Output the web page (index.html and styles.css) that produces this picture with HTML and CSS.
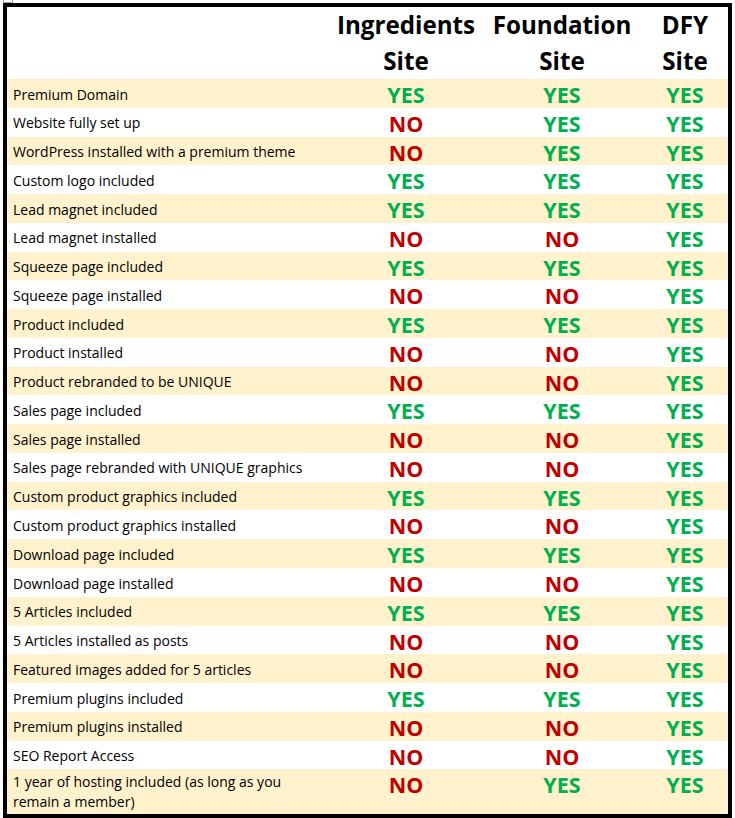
FILE: index.html
```html
<!DOCTYPE html>
<html lang="en">
<head>
<meta charset="utf-8">
<title>Site comparison</title>
<link rel="stylesheet" href="styles.css">
</head>
<body>
<div class="handle"></div>
<div class="page">
  <div class="table">
    <div class="row head">
      <div class="cell label"></div>
      <div class="cell th">Ingredients<br>Site</div>
      <div class="cell th">Foundation<br>Site</div>
      <div class="cell th">DFY<br>Site</div>
    </div>
    <div class="row alt"><div class="cell label">Premium Domain</div><div class="cell v yes">YES</div><div class="cell v yes">YES</div><div class="cell v yes">YES</div></div>
    <div class="row"><div class="cell label">Website fully set up</div><div class="cell v no">NO</div><div class="cell v yes">YES</div><div class="cell v yes">YES</div></div>
    <div class="row alt"><div class="cell label">WordPress installed with a premium theme</div><div class="cell v no">NO</div><div class="cell v yes">YES</div><div class="cell v yes">YES</div></div>
    <div class="row"><div class="cell label">Custom logo included</div><div class="cell v yes">YES</div><div class="cell v yes">YES</div><div class="cell v yes">YES</div></div>
    <div class="row alt"><div class="cell label">Lead magnet included</div><div class="cell v yes">YES</div><div class="cell v yes">YES</div><div class="cell v yes">YES</div></div>
    <div class="row"><div class="cell label">Lead magnet installed</div><div class="cell v no">NO</div><div class="cell v no">NO</div><div class="cell v yes">YES</div></div>
    <div class="row alt"><div class="cell label">Squeeze page included</div><div class="cell v yes">YES</div><div class="cell v yes">YES</div><div class="cell v yes">YES</div></div>
    <div class="row"><div class="cell label">Squeeze page installed</div><div class="cell v no">NO</div><div class="cell v no">NO</div><div class="cell v yes">YES</div></div>
    <div class="row alt"><div class="cell label">Product included</div><div class="cell v yes">YES</div><div class="cell v yes">YES</div><div class="cell v yes">YES</div></div>
    <div class="row"><div class="cell label">Product installed</div><div class="cell v no">NO</div><div class="cell v no">NO</div><div class="cell v yes">YES</div></div>
    <div class="row alt"><div class="cell label">Product rebranded to be UNIQUE</div><div class="cell v no">NO</div><div class="cell v no">NO</div><div class="cell v yes">YES</div></div>
    <div class="row"><div class="cell label">Sales page included</div><div class="cell v yes">YES</div><div class="cell v yes">YES</div><div class="cell v yes">YES</div></div>
    <div class="row alt"><div class="cell label">Sales page installed</div><div class="cell v no">NO</div><div class="cell v no">NO</div><div class="cell v yes">YES</div></div>
    <div class="row"><div class="cell label">Sales page rebranded with UNIQUE graphics</div><div class="cell v no">NO</div><div class="cell v no">NO</div><div class="cell v yes">YES</div></div>
    <div class="row alt"><div class="cell label">Custom product graphics included</div><div class="cell v yes">YES</div><div class="cell v yes">YES</div><div class="cell v yes">YES</div></div>
    <div class="row"><div class="cell label">Custom product graphics installed</div><div class="cell v no">NO</div><div class="cell v no">NO</div><div class="cell v yes">YES</div></div>
    <div class="row alt"><div class="cell label">Download page included</div><div class="cell v yes">YES</div><div class="cell v yes">YES</div><div class="cell v yes">YES</div></div>
    <div class="row"><div class="cell label">Download page installed</div><div class="cell v no">NO</div><div class="cell v no">NO</div><div class="cell v yes">YES</div></div>
    <div class="row alt"><div class="cell label">5 Articles included</div><div class="cell v yes">YES</div><div class="cell v yes">YES</div><div class="cell v yes">YES</div></div>
    <div class="row"><div class="cell label">5 Articles installed as posts</div><div class="cell v no">NO</div><div class="cell v no">NO</div><div class="cell v yes">YES</div></div>
    <div class="row alt"><div class="cell label">Featured images added for 5 articles</div><div class="cell v no">NO</div><div class="cell v no">NO</div><div class="cell v yes">YES</div></div>
    <div class="row"><div class="cell label">Premium plugins included</div><div class="cell v yes">YES</div><div class="cell v yes">YES</div><div class="cell v yes">YES</div></div>
    <div class="row alt"><div class="cell label">Premium plugins installed</div><div class="cell v no">NO</div><div class="cell v no">NO</div><div class="cell v yes">YES</div></div>
    <div class="row"><div class="cell label">SEO Report Access</div><div class="cell v no">NO</div><div class="cell v no">NO</div><div class="cell v yes">YES</div></div>
    <div class="row alt last"><div class="cell label">1 year of hosting included (as long as you<br>remain a member)</div><div class="cell v no">NO</div><div class="cell v yes">YES</div><div class="cell v yes">YES</div></div>
  </div>
</div>
</body>
</html>
```
FILE: styles.css
```css
html, body {
  margin: 0;
  padding: 0;
  background: #ffffff;
}

body {
  font-family: "Open Sans", Lato, sans-serif;
  color: #000000;
  width: 735px;
  height: 818px;
  overflow: hidden;
  position: relative;
}

.handle {
  position: absolute;
  left: 3px;
  top: -7px;
  width: 8px;
  height: 8px;
  border: 1px solid #a0a0a0;
  background: #ffffff;
}

.page {
  padding: 3px 0 0 3px;
}

.table {
  width: 721px;
  height: 807px;
  border: 4px solid #000000;
  display: flex;
  flex-direction: column;
  background: #ffffff;
}

.row {
  display: grid;
  grid-template-columns: 323px 152px 160px 86px;
  height: 28.78px;
  flex: none;
}

.row.alt {
  background: #fff2cc;
}

.row.head {
  height: 72px;
}

.row.last {
  flex: 1 1 auto;
  height: auto;
}

.cell {
  display: flex;
  align-items: center;
  min-width: 0;
}

.label {
  padding-left: 6px;
  font-size: 14px;
  line-height: 20px;
}

.th {
  justify-content: center;
  text-align: center;
  font-weight: 700;
  font-size: 24.2px;
  line-height: 36px;
}

.v {
  justify-content: center;
  align-items: flex-start;
  font-weight: 700;
  font-size: 21.5px;
  line-height: 31px;
}

.yes {
  color: #00b050;
}

.no {
  color: #c00000;
}
```
